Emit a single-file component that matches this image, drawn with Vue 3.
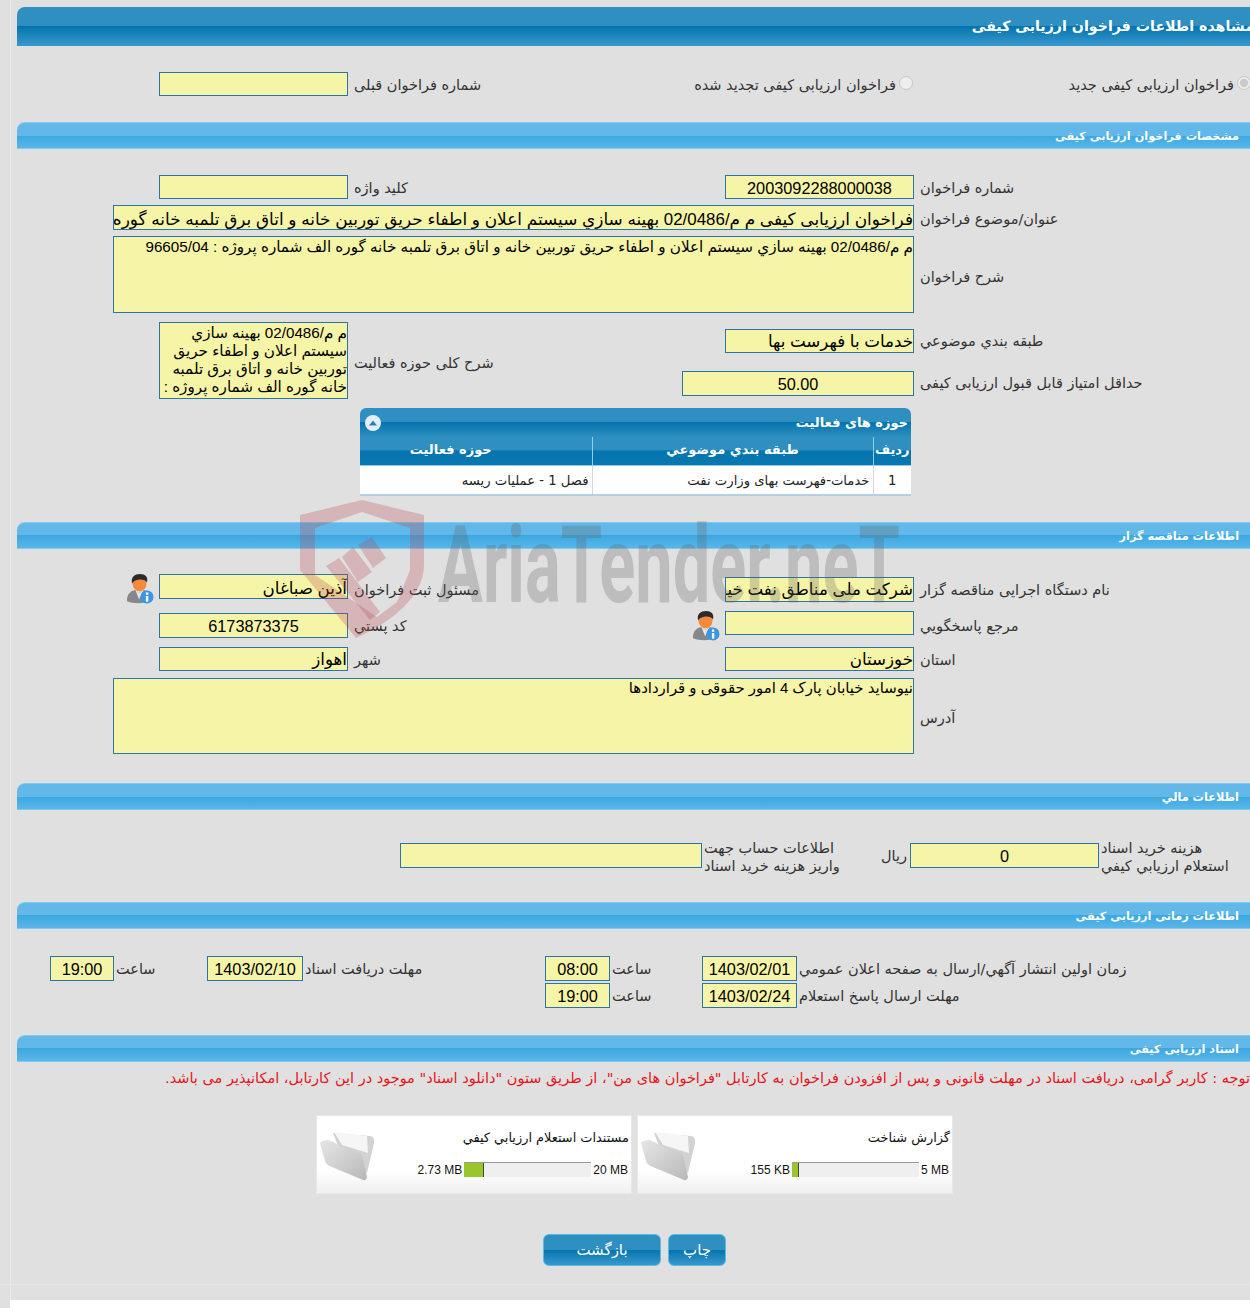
<script setup>
const desc = 'م م/02/0486 بهینه سازي سیستم اعلان و اطفاء حریق توربین خانه و اتاق برق تلمبه خانه گوره الف شماره پروژه : 96605/04'
const subject = 'فراخوان ارزیابی کیفی ' + desc
const address = 'نیوساید خیابان پارک 4 امور حقوقی و قراردادها'
const files = [
  { name: 'گزارش شناخت', max: '5 MB', used: '155 KB', fill: 5 },
  { name: 'مستندات استعلام ارزيابي کيفي', max: '20 MB', used: '2.73 MB', fill: 15 }
]
</script>

<template>
  <div class="page">
    <div class="panel">
      <div class="bar bar-main">مشاهده اطلاعات فراخوان ارزیابی کیفی</div>

      <div class="row r-radio">
        <input class="in w189 a" readonly />
        <label class="lab b">شماره فراخوان قبلی</label>
        <label class="radio c second-radio"><input type="radio" name="k" disabled /><span>فراخوان ارزیابی کیفی تجدید شده</span></label>
        <label class="radio d first"><input type="radio" name="k" checked disabled /><span>فراخوان ارزیابی کیفی جدید</span></label>
      </div>

      <div class="bar bar-sec s-spec">مشخصات فراخوان ارزیابی کیفی</div>

      <div class="row r-key">
        <input class="in w189 a" readonly />
        <label class="lab b">کلید واژه</label>
        <input class="in w189 c num big" readonly value="2003092288000038" />
        <label class="lab d">شماره فراخوان</label>
      </div>
      <div class="row r-subject">
        <input class="in wide ac subj" readonly :value="subject" />
        <label class="lab d">عنوان/موضوع فراخوان</label>
      </div>
      <div class="row r-desc">
        <textarea class="in ta wide ac" readonly :value="desc"></textarea>
        <label class="lab d">شرح فراخوان</label>
      </div>
      <div class="row r-class">
        <textarea class="in ta w189 a tall" readonly :value="desc"></textarea>
        <label class="lab b tallb">شرح کلی حوزه فعالیت</label>
        <input class="in w189 c strong top7" readonly value="خدمات با فهرست بها" />
        <label class="lab d">طبقه بندي موضوعي</label>
        <input class="in w232 c num big top11 second" readonly value="50.00" />
        <label class="lab d second top16l">حداقل امتیاز قابل قبول ارزیابی کیفی</label>
      </div>

      <div class="tbl">
        <div class="tbl-cap">
          <span>حوزه های فعالیت</span>
          <svg class="collapse" viewBox="0 0 16 16"><circle cx="8" cy="8" r="8" fill="#e4eef6" /><path d="M4 10.500 8 5.500 12 10.500Z" fill="#2a80b4" /></svg>
        </div>
        <table>
          <thead>
            <tr><th class="t1">ردیف</th><th class="t2">طبقه بندي موضوعي</th><th class="t3">حوزه فعالیت</th></tr>
          </thead>
          <tbody>
            <tr><td class="t1 ctr">1</td><td class="t2">خدمات-فهرست بهای وزارت نفت</td><td>فصل 1 - عملیات ریسه</td></tr>
          </tbody>
        </table>
      </div>

      <div class="bar bar-sec s-org">اطلاعات مناقصه گزار</div>

      <div class="row r-org">
        <div class="a with-icon">
          <svg class="avatar" viewBox="0 0 30 32"><use href="#user-info" /></svg>
          <input class="in w189 strong" readonly value="آذین صباغان" />
        </div>
        <label class="lab b">مسئول ثبت فراخوان</label>
        <input class="in w189 c strong top3" readonly value="شرکت ملی مناطق نفت خیز جنوب" />
        <label class="lab d">نام دستگاه اجرایی مناقصه گزار</label>
      </div>
      <div class="row r-contact">
        <input class="in w189 a num big top2" readonly value="6173873375" />
        <label class="lab b">کد پستي</label>
        <div class="c with-icon">
          <svg class="avatar" viewBox="0 0 30 32">
            <defs>
              <g id="user-info">
                <path d="M1 29C1 21 5 18 10 17L14 20 19 17C24 18 27 21 27 28 20 32 8 32 1 29Z" fill="#85888b" />
                <path d="M10 17 14 27 19 17 14.500 20Z" fill="#e4e4e4" />
                <ellipse cx="14.500" cy="10" rx="7.500" ry="8.500" fill="#f58a3c" />
                <path d="M6.500 10C5 3 9.500 0 15 0S24 3 22.500 9C21 6 17 5.500 13 6 10 6.500 8 7.500 6.500 10Z" fill="#2c2a2a" />
                <circle cx="22.500" cy="24.500" r="7" fill="#3a96e0" />
                <rect x="21.300" y="23.500" width="2.600" height="6" fill="#fff" />
                <rect x="21.300" y="19.700" width="2.600" height="2.500" fill="#fff" />
              </g>
            </defs>
            <use href="#user-info" />
          </svg>
          <input class="in w189" readonly />
        </div>
        <label class="lab d">مرجع پاسخگويي</label>
      </div>
      <div class="row r-city">
        <input class="in w189 a strong" readonly value="اهواز" />
        <label class="lab b">شهر</label>
        <input class="in w189 c strong" readonly value="خوزستان" />
        <label class="lab d">استان</label>
      </div>
      <div class="row r-addr">
        <textarea class="in ta wide ac" readonly :value="address"></textarea>
        <label class="lab d">آدرس</label>
      </div>

      <div class="bar bar-sec s-fin">اطلاعات مالي</div>

      <div class="fin">
        <input class="in fin-acc" readonly />
        <label class="lab two">اطلاعات حساب جهت<br />واریز هزینه خرید اسناد</label>
        <label class="lab rial">ریال</label>
        <input class="in w189 num big" readonly value="0" />
        <label class="lab two">هزینه خرید اسناد<br />استعلام ارزيابي کيفي</label>
      </div>

      <div class="bar bar-sec s-time">اطلاعات زمانی ارزیابی کیفی</div>

      <div class="dates">
        <input class="in num big" readonly value="19:00" />
        <label class="lab">ساعت</label>
        <input class="in num big" readonly value="1403/02/10" />
        <label class="lab">مهلت دریافت اسناد</label>
        <input class="in num big" readonly value="08:00" />
        <label class="lab">ساعت</label>
        <input class="in num big" readonly value="1403/02/01" />
        <label class="lab">زمان اولین انتشار آگهي/ارسال به صفحه اعلان عمومي</label>
      </div>
      <div class="dates dates2">
        <input class="in num big" readonly value="19:00" />
        <label class="lab">ساعت</label>
        <input class="in num big" readonly value="1403/02/24" />
        <label class="lab">مهلت ارسال پاسخ استعلام</label>
      </div>

      <div class="bar bar-sec s-doc">اسناد ارزیابی کیفی</div>

      <p class="notice">توجه : کاربر گرامی، دریافت اسناد در مهلت قانونی و پس از افزودن فراخوان به کارتابل "فراخوان های من"، از طریق ستون "دانلود اسناد" موجود در این کارتابل، امکانپذیر می باشد.</p>

      <div class="cards">
        <div v-for="f in files" :key="f.name" class="card">
          <div class="card-name">{{ f.name }}</div>
          <div class="meter">
            <span class="mb">{{ f.max }}</span>
            <span class="track"><i :style="{ width: f.fill + '%' }"></i></span>
            <span class="mb">{{ f.used }}</span>
          </div>
          <svg class="folder" viewBox="-2 0 58 52">
            <defs>
              <linearGradient id="fold" x1="0" y1="0" x2="1" y2="1"><stop offset="0" stop-color="#e6e6e6" /><stop offset="1" stop-color="#b8b8b8" /></linearGradient>
            </defs>
            <path d="M13 2 50 5Q55 6 54 12L47 42 20 20Z" fill="#d2d2d2" />
            <path d="M14 1 47 5 48 22 22 14Z" fill="#f6f6f6" />
            <path d="M0 12Q0 10 8 9C16 11 22 18 30 19L40 22Q42 23 43 28L47 46Q46 50 43 49L12 36Q6 34 5 30Z" fill="url(#fold)" />
          </svg>
        </div>
      </div>

      <div class="actions">
        <button class="btn btn-back" type="button">بازگشت</button>
        <button class="btn btn-print" type="button">چاپ</button>
      </div>
    </div>
    <div class="footer"></div>

    <svg class="watermark" viewBox="290 495 620 150" aria-hidden="true">
      <path
        class="wm-shield"
        fill-rule="evenodd"
        d="M362 500 300 515 300 570 356 638C385 625 424 600 424 565L424 515ZM315 528 362 512 410 528 410 570 397 602 377 617 315 575Z"
      />
      <path class="wm-shield" d="M358 545 372 537 386 558 373 568ZM342 557 353 547 372 572 358 582ZM326 566 339 558 380 612 370 620Z" />
      <text class="wm-text" x="438" y="602" textLength="462" lengthAdjust="spacingAndGlyphs">AriaTender.neT</text>
    </svg>
  </div>
</template>

<style>
html, body { margin: 0; overflow: hidden; background: #e0e0e0; }
</style>

<style scoped>
.page {
  position: relative;
  width: 1250px;
  height: 1308px;
  overflow: hidden;
  font-family: "DejaVu Sans", sans-serif;
  font-size: 14.500px;
  color: #333;
  background: linear-gradient(90deg, #e0e0e0 10px, #e9e9e9 10px, #e9e9e9 11px, #e0e0e0 11px);
}
.panel {
  padding-top: 7px;
  padding-bottom: 18px;
  border-bottom: 1px solid #e8e8e8;
}
.footer { height: 8px; margin-top: 15px; margin-left: 10px; background: #fff; }
.bar {
  margin-left: 17px;
  direction: rtl;
  white-space: nowrap;
  box-sizing: border-box;
  border-top-left-radius: 8px;
  font-weight: 700;
  color: #fff;
}
.bar-main {
  height: 39px;
  line-height: 38px;
  margin-right: -4px;
  font-size: 14.200px;
  background: linear-gradient(#2f8fc0 0, #2f8fc0 50%, #0474ae 50%, #3a98cd 100%);
}
.bar-sec {
  height: 27px;
  line-height: 27px;
  padding-right: 11px;
  font-size: 11.300px;
  border-top: 1px solid #7cccf2;
  border-bottom: 1px solid #7cccf2;
  background: linear-gradient(#62b8e8 0, #62b8e8 50%, #3ca8e0 50%, #58b6ea 100%);
}
.s-spec { margin-top: 26px; }
.s-org { margin-top: 26px; }
.s-fin { margin-top: 29px; }
.s-time { margin-top: 34px; }
.s-doc { margin-top: 27px; }

.row {
  display: grid;
  grid-template-columns: 348px 6px 306px 254px 6px 330px;
}
.a { grid-column: 1; justify-self: end; grid-row: 1; }
.b { grid-column: 3; grid-row: 1; }
.c { grid-column: 4; justify-self: end; grid-row: 1; }
.d { grid-column: 6; grid-row: 1; }
.ac { grid-column: 1 / 5; justify-self: end; grid-row: 1; }
.lab {
  direction: rtl;
  text-align: left;
  align-self: center;
  white-space: nowrap;
}
.in {
  display: block;
  box-sizing: border-box;
  height: 24px;
  margin: 0;
  padding: 0;
  direction: rtl;
  color: #000;
  font-family: "Liberation Sans", "DejaVu Sans", sans-serif;
  font-size: 15.200px;
  background: #f6f4a6;
  border: 1px solid #2a74a8;
  border-radius: 0;
  outline: none;
}
.ta { resize: none; overflow: hidden; line-height: 18px; padding-top: 1px; }
.w189 { width: 189px; }
.w232 { width: 232px; }
.wide { width: 801px; }
.num { text-align: center; }
.big { font-size: 16.300px; padding-top: 2px; }
.strong { font-size: 16.700px; }
.subj { font-size: 16.900px; padding-top: 3px; }

.r-radio { margin-top: 26px; height: 24px; }
.radio {
  direction: rtl;
  display: flex;
  align-items: flex-start;
  white-space: nowrap;
  line-height: 26px;
}
.radio input { width: 14px; height: 14px; margin: 4px 0 0 3px; flex: none; }
.first { margin-right: -1px; }
.second-radio { margin-right: 1px; }
.r-key { margin-top: 26px; height: 24px; }
.r-key .lab { padding-top: 2px; }
.r-subject { margin-top: 6px; height: 25px; }
.r-subject .in { height: 25px; }
.r-subject .lab { padding-top: 2px; }
.r-desc { margin-top: 6px; height: 77px; }
.r-desc .in, .r-addr .in { height: 100%; }
.r-desc .lab { padding-top: 4px; }
.r-class {
  margin-top: 9px;
  height: 77px;
  grid-template-rows: 38px 39px;
  align-items: start;
}
.tall { grid-row: 1 / 3; height: 77px; }
.tallb { grid-row: 1 / 3; padding-top: 4px; }
.top7 { margin-top: 7px; }
.top11 { margin-top: 11px; height: 25px; }
.top16l { margin-top: 15px; align-self: start; }
.second { grid-row: 2; }
.top3 { margin-top: 3px; }
.top2 { margin-top: 2px; height: 25px; }

.r-org { margin-top: 25px; height: 29px; align-items: start; }
.r-org .a .in { height: 25px; padding-top: 3px; }
.r-org .c { height: 25px; }
.r-org .lab { align-self: auto; margin-top: 8px; }
.r-contact { margin-top: 8px; height: 27px; align-items: start; }
.r-contact .lab { align-self: auto; margin-top: 7px; }
.r-city { margin-top: 9px; height: 24px; }
.r-city .lab { padding-top: 2px; }
.r-addr { margin-top: 7px; height: 76px; }
.r-addr .in { font-size: 14.900px; padding-top: 0; }
.r-addr .lab { padding-top: 3px; }
.with-icon { display: flex; align-items: flex-start; gap: 5px; }
.avatar { width: 28px; height: 32px; margin-top: -1px; }

.tbl {
  width: 551px;
  margin: 9px 0 0 360px;
  height: 88px;
  box-sizing: border-box;
  direction: rtl;
  border-radius: 6px 6px 0 0;
  border-bottom: 2px solid #b5d0e2;
  overflow: hidden;
  background: #fff;
}
.tbl-cap {
  display: flex;
  justify-content: space-between;
  align-items: center;
  height: 29px;
  padding: 0 3px 0 5px;
  color: #fff;
  font-weight: 700;
  font-size: 13px;
  background: linear-gradient(#2f8fc0 0, #2f8fc0 50%, #0474ae 50%, #2f8fc0 100%);
}
.collapse { width: 16px; height: 16px; }
table { width: 100%; border-collapse: collapse; table-layout: fixed; }
th {
  box-sizing: border-box;
  height: 28px;
  padding: 5px 0 0;
  vertical-align: top;
  color: #fff;
  font-size: 13px;
  font-weight: 700;
  border-left: 1px solid #8fd0ee;
  background: linear-gradient(#2f8fc0 0, #2f8fc0 45%, #0474ae 50%, #0a78b0 100%);
}
th:last-child, td:last-child { border-left: 0; }
th.t3 { padding-right: 50px; }
td {
  box-sizing: border-box;
  height: 29px;
  padding: 2px 3px 0;
  font-size: 13.200px;
  color: #222;
  border-top: 1px solid #8fd0ee;
  border-left: 1px solid #d8d8d8;
}
.t1 { width: 38px; }
.t2 { width: 281px; }
.ctr { text-align: center; }

.fin {
  display: grid;
  grid-template-columns: 302px 179px 29px 189px 1fr;
  grid-template-rows: 25px;
  margin: 33px 0 0 400px;
  height: 25px;
}
.fin .in { height: 25px; }
.fin-acc { width: 302px; }
.two { align-self: start; margin-top: -4px; line-height: 18px; padding-left: 2px; }
.rial { justify-self: start; }

.dates {
  display: grid;
  grid-template-columns: 64px 93px 96px 242px 65px 92px 95px 1fr;
  grid-template-rows: 25px;
  margin: 27px 0 0 50px;
  height: 25px;
}
.dates .lab { padding-left: 2px; }
.dates .in { height: 25px; }
.dates2 { margin-top: 2px; grid-template-columns: 65px 92px 95px 1fr; margin-left: 545px; }

.notice {
  margin: 7px 0 0;
  height: 18px;
  line-height: 18px;
  direction: rtl;
  white-space: nowrap;
  color: #e8141c;
  font-size: 14.500px;
}
.cards {
  display: flex;
  direction: rtl;
  gap: 5px;
  margin: 28px 297px 0 0;
}
.card {
  position: relative;
  box-sizing: border-box;
  width: 316px;
  height: 79px;
  padding: 14px 2px 0 5px;
  background: linear-gradient(#fff 0, #fff 70%, #f0f0f0 100%);
  border: 1px solid #e8e8e8;
}
.card-name { font-size: 12.900px; color: #111; line-height: 16px; }
.meter {
  display: flex;
  align-items: center;
  gap: 2px;
  margin: 16px 1px 0 0;
  direction: rtl;
  font-family: "Liberation Sans", sans-serif;
  font-size: 12px;
  color: #111;
}
.mb { flex: none; direction: ltr; }
.track {
  display: block;
  flex: none;
  width: 127px;
  height: 15px;
  box-sizing: border-box;
  direction: ltr;
  text-align: left;
  background: #efefef;
  border-top: 1px solid #999;
}
.track i {
  display: block;
  height: 14px;
  background: #99c62c;
  border-right: 1px solid #444;
}
.folder {
  position: absolute;
  left: 1px;
  top: 15px;
  width: 58px;
  height: 52px;
  filter: blur(.4px);
}
.actions {
  display: flex;
  gap: 7px;
  margin: 40px 0 0 543px;
}
.btn {
  height: 32px;
  padding: 0;
  font-family: "DejaVu Sans", sans-serif;
  font-size: 15px;
  color: #fff;
  border: 1px solid #5bbbe5;
  border-radius: 6px;
  background: linear-gradient(#2f8fc0 0, #2f8fc0 50%, #0474ae 50%, #3a98cd 100%);
}
.btn-back { width: 118px; }
.btn-print { width: 58px; }
.watermark {
  position: absolute;
  left: 290px;
  top: 495px;
  width: 620px;
  height: 150px;
  pointer-events: none;
}
.wm-shield { fill: #b8424e; fill-opacity: .27; }
.wm-text {
  font-family: Roboto, sans-serif;
  font-size: 108px;
  font-weight: 700;
  fill: #606060;
  fill-opacity: .27;
}
</style>
